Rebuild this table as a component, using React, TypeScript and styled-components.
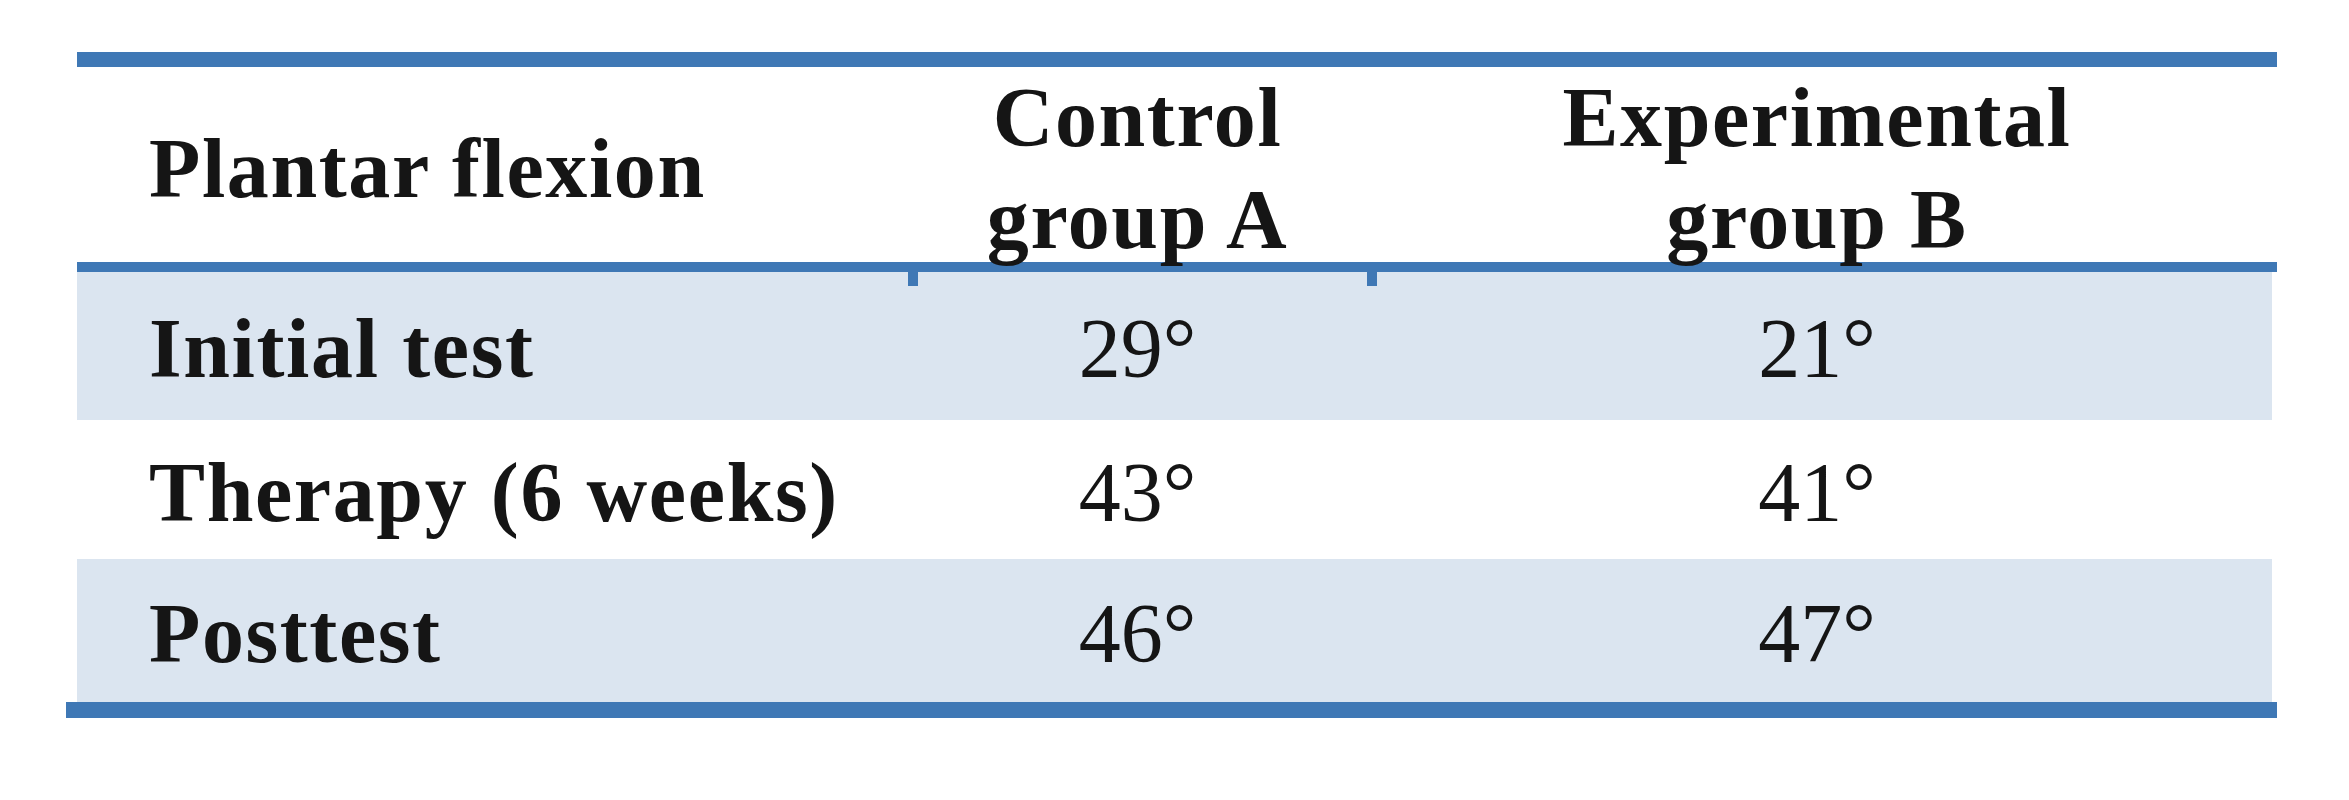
import React from "react";
import styled, { createGlobalStyle } from "styled-components";

const Global = createGlobalStyle`
  html, body { margin: 0; padding: 0; background: #ffffff; }
  body { font-family: "Liberation Serif", "Times New Roman", serif; color: #151515; }
`;

const BLUE = "#3f78b5";
const SHADE = "#dbe5f0";

const Table = styled.div`
  display: flex;
  flex-direction: column;
  width: 2200px;
  margin: 52px 0 0 77px;
`;

const Rule = styled.div<{ $h: number; $ext?: number }>`
  height: ${(p) => p.$h}px;
  background: ${BLUE};
  margin-left: ${(p) => -(p.$ext ?? 0)}px;
`;

const Grid = styled.div`
  display: grid;
  grid-template-columns: 831px 459px 900px;
  align-items: center;
`;

const HeaderRow = styled(Grid)`
  height: 195px;
  border-bottom: 10px solid ${BLUE};
`;

const BodyRow = styled(Grid)<{ $h: number; $shaded: boolean }>`
  height: ${(p) => p.$h}px;
  margin-right: 5px;
  padding-top: 6px;
  box-sizing: border-box;
  background: ${(p) => (p.$shaded ? SHADE : "#ffffff")};
`;

const Label = styled.div`
  padding-left: 72px;
  font-size: 84px;
  line-height: 102px;
  font-weight: 700;
  letter-spacing: 1.6px;
  white-space: nowrap;
`;

const HeadCell = styled.div<{ $tick?: boolean }>`
  position: relative;
  text-align: center;
  font-size: 84px;
  line-height: 102px;
  font-weight: 700;
  letter-spacing: 1.6px;
  align-self: stretch;
  display: flex;
  flex-direction: column;
  justify-content: center;
  &::after {
    content: "";
    display: ${(p) => (p.$tick ? "block" : "none")};
    position: absolute;
    left: 0;
    top: 100%;
    width: 10px;
    height: 15px;
    background: ${BLUE};
  }
`;

const Value = styled.div`
  text-align: center;
  font-size: 84px;
  line-height: 102px;
  font-weight: 400;
`;

const rows = [
  { label: "Initial test", a: "29°", b: "21°", h: 148 },
  { label: "Therapy (6 weeks)", a: "43°", b: "41°", h: 139 },
  { label: "Posttest", a: "46°", b: "47°", h: 143 },
];

export default function App() {
  return (
    <>
      <Global />
      <Table>
        <Rule $h={15} />
        <HeaderRow>
          <Label>Plantar flexion</Label>
          <HeadCell $tick>
            <span>Control</span>
            <span>group A</span>
          </HeadCell>
          <HeadCell $tick>
            <span>Experimental</span>
            <span>group B</span>
          </HeadCell>
        </HeaderRow>
        {rows.map((r, i) => (
          <BodyRow key={r.label} $h={r.h} $shaded={i % 2 === 0}>
            <Label>{r.label}</Label>
            <Value>{r.a}</Value>
            <Value>{r.b}</Value>
          </BodyRow>
        ))}
        <Rule $h={16} $ext={11} />
      </Table>
    </>
  );
}
